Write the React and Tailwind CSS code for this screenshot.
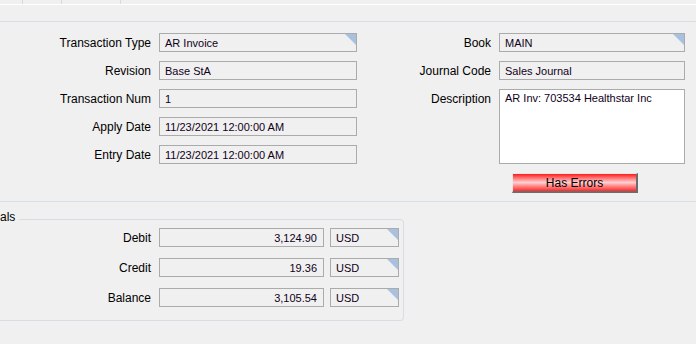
import React from "react";

const font = { fontFamily: '"Liberation Sans", Arial, sans-serif' };

function Corner() {
  return (
    <div className="absolute right-0 top-0 h-0 w-0 border-l-[11px] border-t-[11px] border-l-transparent border-t-[#a9c0de]" />
  );
}

function Box({ children, w, corner, right, h = "h-[19px]", white, top }) {
  return (
    <div
      className={`relative box-border shrink-0 border border-[#ababab] ${h} ${w} ${white ? "bg-white" : "bg-[#f0f0f0]"} flex ${top ? "items-start pt-[3px]" : "items-center"} ${right ? "justify-end pr-[6px]" : "pl-[5px]"} text-[11px] leading-none text-[#10001a]`}
    >
      <span className={top ? "" : "pt-[1px]"}>{children}</span>
      {corner && <Corner />}
    </div>
  );
}

function Row({ label, labelW, children }) {
  return (
    <div className="flex items-start gap-[8px]">
      <div className={`${labelW} shrink-0 h-[19px] text-right text-[12px] leading-[21px] text-black`}>{label}</div>
      {children}
    </div>
  );
}

export default function App() {
  return (
    <div className="w-[696px] h-[344px] overflow-hidden bg-[#f0f0f0]" style={font}>
      {/* top tab strip */}
      <div className="flex h-[5px] border-b border-white">
        <div className="w-[23px] border-r border-[#d9d9d9]" />
        <div className="w-[39px] border-r border-[#d9d9d9]" />
        <div className="w-[59px] border-r border-[#d9d9d9]" />
        <div className="flex-1" />
      </div>
      <div className="h-[16px]" />
      <div className="h-[1px] bg-[#d5dfe5]" />

      {/* header fields */}
      <div className="flex pt-[11px] h-[179px]">
        <div className="flex flex-col gap-[9px] w-[499px] shrink-0">
          <Row label="Transaction Type" labelW="w-[151px]">
            <Box w="w-[198px]" corner>AR Invoice</Box>
          </Row>
          <Row label="Revision" labelW="w-[151px]">
            <Box w="w-[198px]">Base StA</Box>
          </Row>
          <Row label="Transaction Num" labelW="w-[151px]">
            <Box w="w-[198px]">1</Box>
          </Row>
          <Row label="Apply Date" labelW="w-[151px]">
            <Box w="w-[198px]">11/23/2021 12:00:00 AM</Box>
          </Row>
          <Row label="Entry Date" labelW="w-[151px]">
            <Box w="w-[198px]">11/23/2021 12:00:00 AM</Box>
          </Row>
        </div>
        <div className="flex flex-col gap-[9px] -ml-[141px]">
          <Row label="Book" labelW="w-[133px]">
            <Box w="w-[186px]" corner>MAIN</Box>
          </Row>
          <Row label="Journal Code" labelW="w-[133px]">
            <Box w="w-[186px]">Sales Journal</Box>
          </Row>
          <div className="flex items-start gap-[8px]">
            <div className="w-[133px] shrink-0 text-right text-[12px] leading-[21px] text-black">Description</div>
            <Box w="w-[186px]" h="h-[75px]" white top>AR Inv: 703534 Healthstar Inc</Box>
          </div>
          <div className="flex pl-[154px]">
            <div
              className="w-[126px] h-[20px] box-border border-t border-l border-[#e8e8e8] border-r-2 border-b-2 border-r-[#6d6d6d] border-b-[#6d6d6d] flex items-center justify-center text-[12px] text-black bg-[linear-gradient(to_bottom,#ff1a1a_0%,#ff7a7a_25%,#ffd0d0_50%,#ff7a7a_75%,#ff2a2a_100%)]"
            >
              Has Errors
            </div>
          </div>
        </div>
      </div>

      <div className="h-[1px] bg-[#d5dfe5]" />

      {/* totals group */}
      <div className="relative pt-[17px]">
        <div className="w-[404px] h-[102px] box-border border border-l-0 border-[#d9dde3] rounded-r-[4px] pt-[8px] flex flex-col gap-[11px]">
          {[
            ["Debit", "3,124.90"],
            ["Credit", "19.36"],
            ["Balance", "3,105.54"],
          ].map(([l, v]) => (
            <div key={l} className="flex items-start">
              <div className="w-[151px] shrink-0 h-[19px] text-right text-[12px] leading-[21px] text-black">{l}</div>
              <div className="w-[8px] shrink-0" />
              <Box w="w-[165px]" right>{v}</Box>
              <div className="w-[6px] shrink-0" />
              <Box w="w-[69px]" corner>USD</Box>
            </div>
          ))}
        </div>
        <div className="absolute left-0 top-[8px] bg-[#f0f0f0] pr-[4px] text-[12px] leading-[14px] text-black">als</div>
      </div>
    </div>
  );
}
